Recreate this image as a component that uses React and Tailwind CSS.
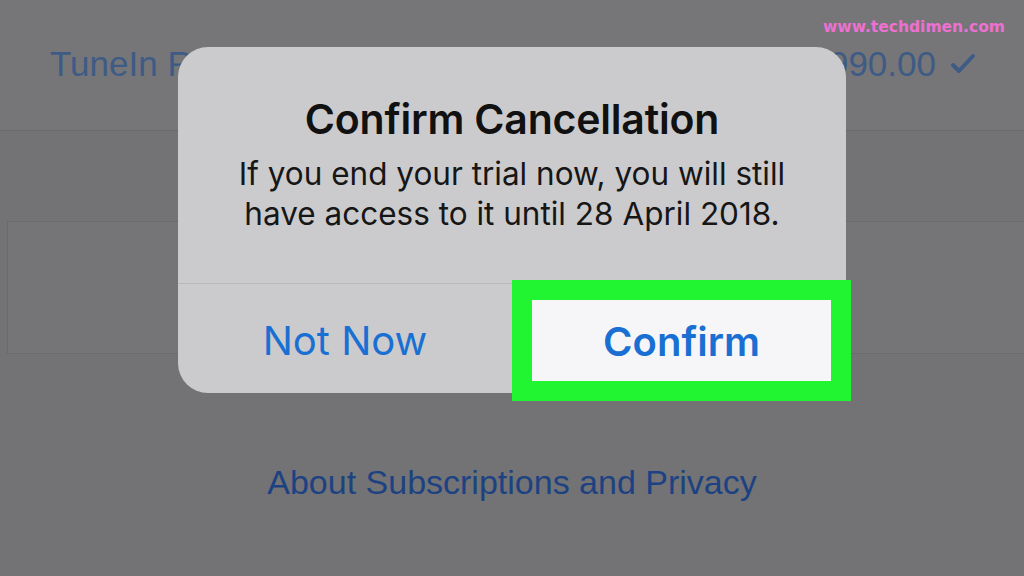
export default function App() {
  return (
    <div className="relative w-[1024px] h-[576px] overflow-hidden bg-[#737375] font-['Liberation_Sans',sans-serif]">
      {/* dimmed page behind */}
      <div className="flex h-[131px] items-center justify-between border-b border-[#6b6b6d] bg-[#767678] pl-[50px] pr-[48px] pb-[2px]">
        <span className="text-[35px] text-[#3e5b86]">TuneIn Radio Pro</span>
        <div className="flex items-center gap-[14px] text-[35px] text-[#3e5b86]">
          <span>₹1,990.00</span>
          <svg width="26" height="22" viewBox="0 0 26 22" fill="none">
            <path d="M3 12 L9 18 L23 3" stroke="#3e5b86" strokeWidth="4" strokeLinecap="round" strokeLinejoin="round" />
          </svg>
        </div>
      </div>

      <div className="h-[90px]" />

      <div className="ml-[7px] h-[133px] border-y border-l border-[#6b6b6d] bg-[#757577]" />

      <div className="flex items-center justify-center pt-[108px]">
        <span className="text-[34px] leading-[40px] text-[#1d4282]">About Subscriptions and Privacy</span>
      </div>

      {/* watermark */}
      <div className="absolute right-[19px] top-[16px] font-['DejaVu_Sans',sans-serif] text-[15.5px] font-bold text-[#ee70d2]">
        www.techdimen.com
      </div>

      {/* alert */}
      <div className="absolute left-[178px] top-[47px] flex w-[668px] h-[346px] flex-col rounded-[30px] bg-[#cbcbcd] font-['Inter',sans-serif]">
        <div className="flex h-[237px] flex-col items-center border-b border-[#b9b9bb] pt-[47px]">
          <h1 className="text-[41px] leading-[50px] font-semibold tracking-[-0.2px] text-[#111]">Confirm Cancellation</h1>
          <p className="mt-[10px] text-center text-[31.5px] leading-[40px] text-[#161616]">
            If you end your trial now, you will still
            <br />
            have access to it until 28 April 2018.
          </p>
        </div>
        <div className="relative flex flex-1">
          <div className="flex w-1/2 items-center justify-center pt-[4px] text-[40px] text-[#1a6fd2]">Not Now</div>
          <div className="w-1/2" />
          <div className="absolute left-[334px] top-[-4px] flex w-[339px] h-[121px] border-[20px] border-[#21f531] bg-[#f6f6f8] items-center justify-center">
            <span className="pt-[2px] text-[40px] font-semibold text-[#1a6fd2]">Confirm</span>
          </div>
        </div>
      </div>
    </div>
  );
}
